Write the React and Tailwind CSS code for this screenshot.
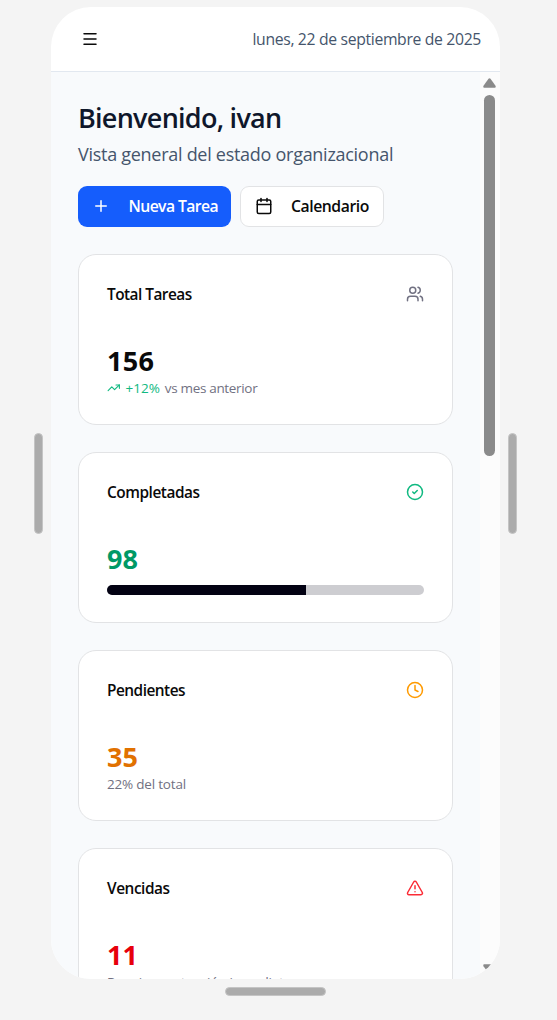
import { Menu, Plus, Calendar, Users, TrendingUp, CircleCheck, Clock, TriangleAlert } from "lucide-react";

function Card({ title, icon, value, valueClass, titleClass, children }) {
  return (
    <section className="flex h-[171px] shrink-0 flex-col rounded-[18px] border border-[#e2e3e5] bg-white px-7 pt-[26px]">
      <div className="flex h-[26px] items-center justify-between">
        <h3 className={`pt-px text-[15.4px] leading-[25px] font-semibold whitespace-nowrap text-neutral-950 ${titleClass}`}>{title}</h3>
        {icon}
      </div>
      <p className={`mt-[36px] text-[27px] leading-9 font-bold ${valueClass}`}>{value}</p>
      {children}
    </section>
  );
}

function Handle({ className }) {
  return <div className={`shrink-0 rounded-full border border-[#c4c4c4] bg-[#ababab] ${className}`} />;
}

export default function App() {
  return (
    <div className="flex h-[1020px] w-[557px] flex-col items-start overflow-hidden bg-[#f4f4f4] pt-[7px] font-['Open_Sans','Noto_Sans',sans-serif]">
      <div className="flex items-start pl-[34px]">
        <Handle className="mt-[426px] h-[101px] w-[9px]" />
        <div className="ml-2 flex h-[972px] w-[449px] flex-col overflow-hidden rounded-[40px] bg-white">
          <header className="flex h-[65px] shrink-0 items-center justify-between border-b border-slate-200 pr-[19px] pl-[30px]">
            <Menu size={18} strokeWidth={2} className="text-neutral-950" />
            <time className="pt-0.5 text-[15.75px] tracking-[-0.34px] whitespace-nowrap text-slate-600">lunes, 22 de septiembre de 2025</time>
          </header>
          <div className="flex min-h-0 flex-1">
            <main className="flex w-[429px] flex-col overflow-hidden bg-[#f8fafc] pr-[27px] pl-[27px]">
              <h1 className="mt-[28px] text-[27px] leading-9 font-semibold tracking-[-0.73px] whitespace-nowrap text-slate-900">Bienvenido, ivan</h1>
              <p className="mt-1 text-[18px] leading-7 tracking-[-0.28px] whitespace-nowrap text-slate-600">Vista general del estado organizacional</p>
              <div className="mt-[18px] flex shrink-0 gap-[9px]">
                <button className="flex h-[41px] w-[153px] items-center rounded-[9px] bg-[#155dfc] pl-[14px] text-[15.75px] font-semibold tracking-[-0.6px] whitespace-nowrap text-white">
                  <Plus size={18} strokeWidth={2} className="-mt-px mr-[18.5px] shrink-0" />
                  Nueva Tarea
                </button>
                <button className="flex h-[41px] w-[144px] items-center rounded-[9px] border border-[#e2e3e5] bg-white pl-[14px] text-[15.75px] font-semibold tracking-[-0.45px] whitespace-nowrap text-neutral-950">
                  <Calendar size={18} strokeWidth={2} className="-mt-px mr-[18px] shrink-0" />
                  Calendario
                </button>
              </div>
              <div className="mt-[27px] flex flex-col gap-[27px]">
                <Card title="Total Tareas" titleClass="tracking-[-0.52px]" value="156" valueClass="tracking-[0.3px] text-neutral-950" icon={<Users size={18} className="text-[#717182]" />}>
                  <p className="flex items-center text-[13.5px] leading-[18px] tracking-[-0.2px] whitespace-nowrap text-[#717182]">
                    <TrendingUp size={13.5} className="mr-[5px] text-[#10b981]" />
                    <span className="mr-[5px] tracking-[0px] text-[#10b981]">+12%</span>
                    <span className="tracking-[-0.33px]">vs mes anterior</span>
                  </p>
                </Card>
                <Card title="Completadas" titleClass="tracking-[-0.45px]" value="98" valueClass="text-[#009966]" icon={<CircleCheck size={18} className="text-[#10b981]" />}>
                  <div className="mt-[8px] h-[10px] overflow-hidden rounded-full bg-[#cdcdd1]">
                    <div className="h-full w-[199px] bg-[#030213]" />
                  </div>
                </Card>
                <Card title="Pendientes" titleClass="tracking-[-0.5px]" value="35" valueClass="text-[#e17100]" icon={<Clock size={18} className="text-[#fe9a00]" />}>
                  <p className="text-[13.5px] leading-[18px] tracking-[-0.2px] text-[#717182]">22% del total</p>
                </Card>
                <Card title="Vencidas" titleClass="tracking-[-0.45px]" value="11" valueClass="text-[#e7000b]" icon={<TriangleAlert size={18} className="text-[#fb2c36]" />}>
                  <p className="text-[13.5px] leading-[18px] tracking-[-0.2px] text-[#717182]">Requieren atención inmediata</p>
                </Card>
              </div>
            </main>
            <div className="flex w-5 flex-col items-center bg-[#fcfcfc] pt-[6px] pr-px">
              <svg width="13" height="10" viewBox="0 0 13 10" fill="#8b8b8b" className="shrink-0">
                <path d="M5.5 .8Q6.5-.2 7.5 .8L12.5 7.8Q13.2 9.7 11.8 9.7H1.2Q-.2 9.7 .5 7.8Z" />
              </svg>
              <div className="mt-[7px] h-[361px] w-[11px] shrink-0 rounded-full bg-[#8b8b8b]" />
              <svg width="13" height="10" viewBox="0 0 13 10" fill="#8b8b8b" className="mt-[508px] shrink-0">
                <path d="M5.5 9.2Q6.5 10.2 7.5 9.2L12.5 2.2Q13.2 .3 11.8 .3H1.2Q-.2 .3 .5 2.2Z" />
              </svg>
            </div>
          </div>
        </div>
        <Handle className="mt-[426px] ml-2 h-[101px] w-[9px]" />
      </div>
      <Handle className="mt-2 ml-[225px] h-[9px] w-[101px]" />
    </div>
  );
}
